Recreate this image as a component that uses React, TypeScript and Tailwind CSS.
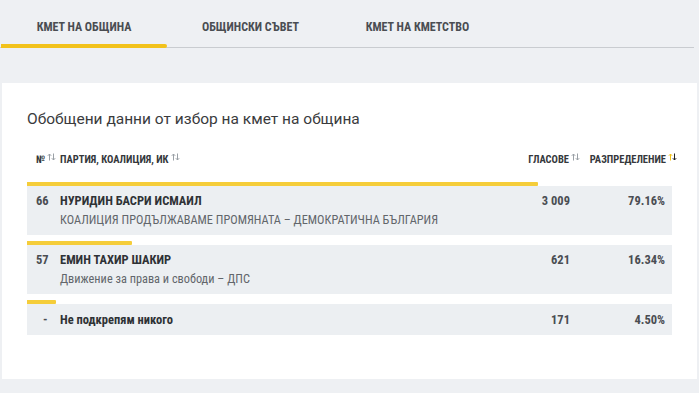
import React from "react";

const Arrows = ({ active = false }: { active?: boolean }) => (
  <svg
    width="9"
    height="8"
    viewBox="0 0 9 8"
    className="inline-block ml-[2px] relative top-[-3px]"
    fill="none"
    strokeWidth="1"
  >
    <path d="M2.5 7.5V1M0.8 2.8L2.5 1L4.2 2.8" stroke={active ? "#f2c21b" : "#9aa0a6"} />
    <path d="M6.5 0.5V7M4.8 5.2L6.5 7L8.2 5.2" stroke={active ? "#222" : "#9aa0a6"} />
  </svg>
);

type Row = {
  no: string;
  name: string;
  party?: string;
  votes: string;
  pct: string;
  bar: number;
};

const rows: Row[] = [
  {
    no: "66",
    name: "НУРИДИН БАСРИ ИСМАИЛ",
    party: "КОАЛИЦИЯ ПРОДЪЛЖАВАМЕ ПРОМЯНАТА – ДЕМОКРАТИЧНА БЪЛГАРИЯ",
    votes: "3 009",
    pct: "79.16%",
    bar: 511,
  },
  {
    no: "57",
    name: "ЕМИН ТАХИР ШАКИР",
    party: "Движение за права и свободи – ДПС",
    votes: "621",
    pct: "16.34%",
    bar: 105,
  },
  {
    no: "-",
    name: "Не подкрепям никого",
    votes: "171",
    pct: "4.50%",
    bar: 29,
  },
];

export default function App() {
  return (
    <div
      className="w-[699px] h-[393px] overflow-hidden bg-[#eef0f3] text-[#333] [font-stretch:75%]"
      style={{ fontFamily: "Roboto, 'Liberation Sans', sans-serif" }}
    >
      {/* Tabs */}
      <div className="flex w-[694px] pl-[1px] border-b border-[#c9ccd0] h-[48px]">
        <div className="w-[166px] flex flex-col">
          <div className="flex-1 flex items-center justify-center pt-[9px] text-[12px] font-bold text-[#4a4d52]">
            КМЕТ НА ОБЩИНА
          </div>
          <div className="h-[4px] rounded-r-full bg-[#f2c21b] mb-[-1px]" />
        </div>
        <div className="w-[167px] flex items-center justify-center pt-[7px] text-[12px] font-bold text-[#4a4d52]">
          ОБЩИНСКИ СЪВЕТ
        </div>
        <div className="w-[167px] flex items-center justify-center pt-[7px] text-[12px] font-bold text-[#4a4d52]">
          КМЕТ НА КМЕТСТВО
        </div>
      </div>

      {/* Card */}
      <div className="ml-[2px] mt-[35px] w-[695px] h-[296px] bg-white pl-[25px] pt-[26px]">
        <div className="text-[15.5px] leading-[20px] text-[#3a3b3d] [font-stretch:100%]">
          Обобщени данни от избор на кмет на община
        </div>

        {/* header */}
        <div className="mt-[23px] w-[651px] flex items-center h-[16px] text-[10.5px] font-bold text-[#35383c] uppercase">
          <div className="w-[33px] pl-[9px] whitespace-nowrap">
            №<Arrows />
          </div>
          <div className="flex-1">
            ПАРТИЯ, КОАЛИЦИЯ, ИК<Arrows />
          </div>
          <div className="w-[80px] text-right">
            ГЛАСОВЕ<Arrows />
          </div>
          <div className="w-[98px] text-right pr-[1px]">
            РАЗПРЕДЕЛЕНИЕ<Arrows active />
          </div>
        </div>

        <div className="mt-[14px] w-[645px] flex flex-col gap-[6px]">
          {rows.map((r, i) => (
            <div key={i} className="flex flex-col">
              <div className="h-[4px] bg-[#f5cd3a] rounded-r-[1px]" style={{ width: r.bar }} />
              <div
                className={`bg-[#eceff2] flex pl-[9px] pr-[7px] ${
                  r.party ? "h-[49px] pt-[8px]" : "h-[31px] items-center"
                }`}
              >
                <div
                  className={`w-[24px] text-[12.5px] font-bold text-[#4a4d52] leading-[14px] ${
                    r.no === "-" ? "pl-[7px]" : ""
                  }`}
                >
                  {r.no}
                </div>
                <div className="flex-1">
                  <div className="text-[12.5px] font-bold text-[#2f3236] leading-[14px]">{r.name}</div>
                  {r.party && (
                    <div className="mt-[5px] text-[12.3px] text-[#62666b] leading-[14px]">{r.party}</div>
                  )}
                </div>
                <div className="w-[100px] text-right text-[12.5px] font-bold text-[#4a4d52] leading-[14px] [font-stretch:87.5%]">
                  {r.votes}
                </div>
                <div className="w-[95px] text-right text-[12.5px] font-bold text-[#4a4d52] leading-[14px] [font-stretch:87.5%]">
                  {r.pct}
                </div>
              </div>
            </div>
          ))}
        </div>
      </div>
    </div>
  );
}
